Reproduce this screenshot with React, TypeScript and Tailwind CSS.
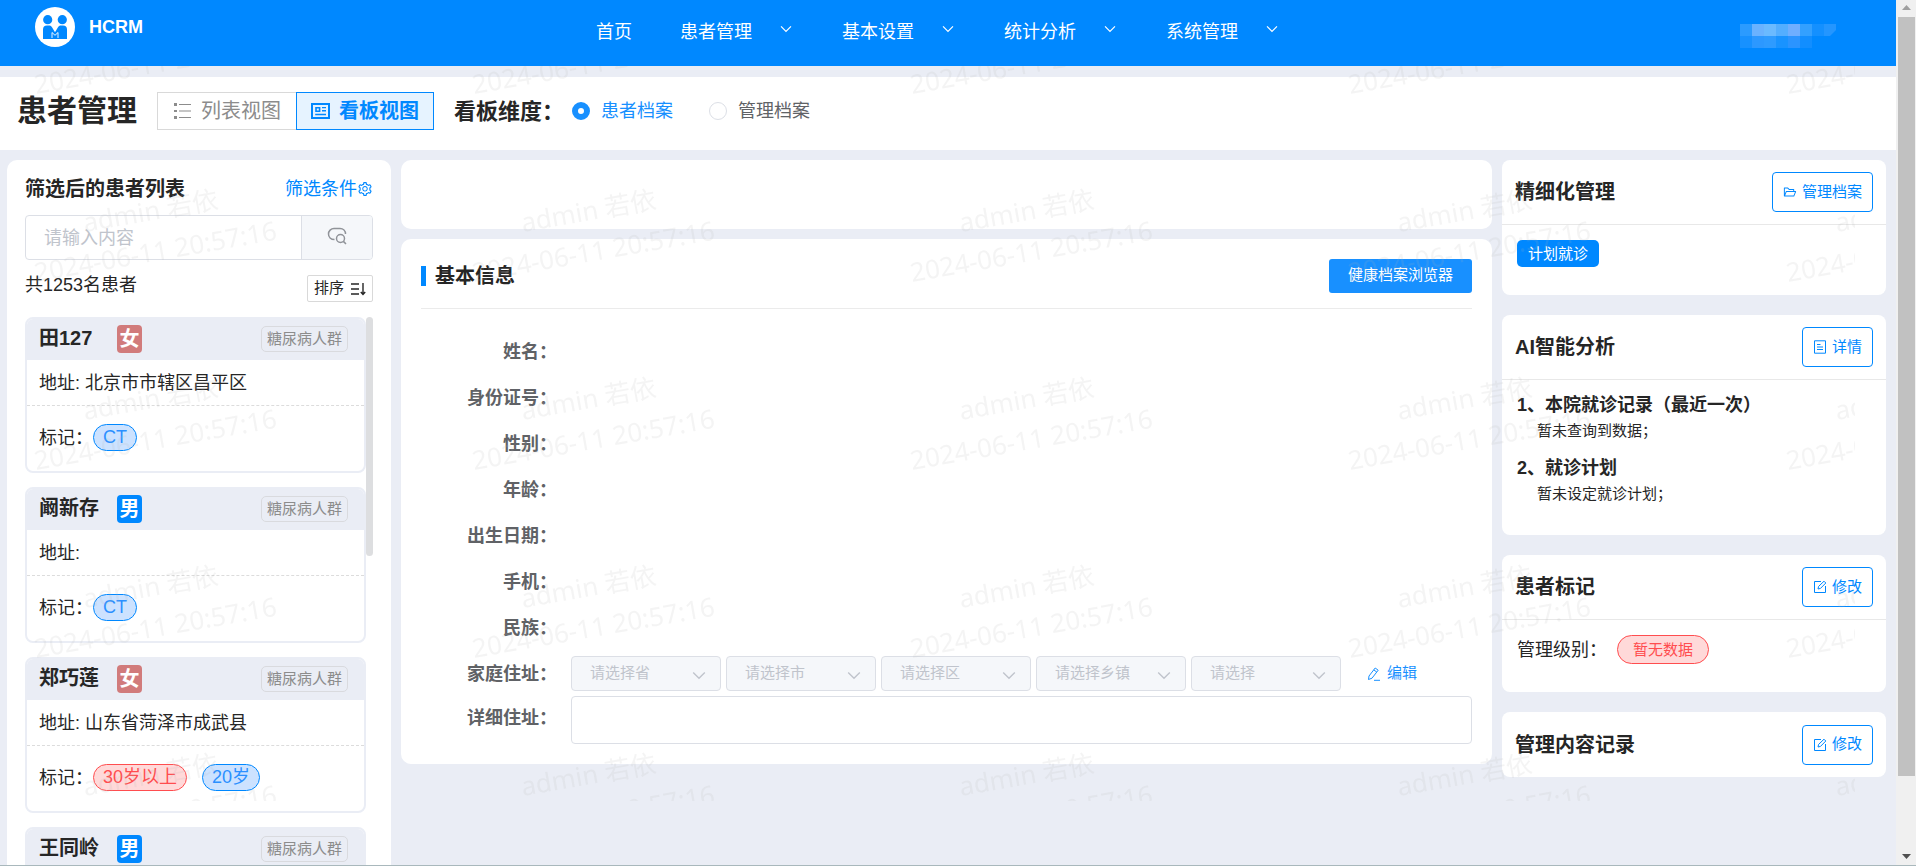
import { useState } from 'react'
import { AiOutlineFolderOpen, AiOutlineSetting } from 'react-icons/ai'
import clsx from 'clsx'

interface Mark {
  text: string
  color: 'blue' | 'red'
}

interface Patient {
  name: string
  gender: '男' | '女'
  group: string
  address: string
  marks: Mark[]
}

const navItems = [
  { label: '患者管理' },
  { label: '基本设置' },
  { label: '统计分析' },
  { label: '系统管理' }
]

const patients: Patient[] = [
  { name: '田127', gender: '女', group: '糖尿病人群', address: '北京市市辖区昌平区', marks: [{ text: 'CT', color: 'blue' }] },
  { name: '阚新存', gender: '男', group: '糖尿病人群', address: '', marks: [{ text: 'CT', color: 'blue' }] },
  {
    name: '郑巧莲',
    gender: '女',
    group: '糖尿病人群',
    address: '山东省菏泽市成武县',
    marks: [
      { text: '30岁以上', color: 'red' },
      { text: '20岁', color: 'blue' }
    ]
  },
  { name: '王同岭', gender: '男', group: '糖尿病人群', address: '', marks: [] }
]

const infoFields = ['姓名', '身份证号', '性别', '年龄', '出生日期', '手机', '民族']
const regionSelects = ['请选择省', '请选择市', '请选择区', '请选择乡镇', '请选择']

// Mosaic cells over the account name, two rows
const mosaic = [
  ['#2b9bff', '#6ab2ff', '#6bbaff', '#54aeff', '#6faeff', '#33a0ff', '#1490ff'],
  ['#1791ff', '#2c98ff', '#2e9bff', '#1993ff', '#2b94ff', '#128eff']
]

function Chevron({ className }: { className?: string }) {
  return (
    <svg viewBox="0 0 14 9" className={className} fill="none" stroke="currentColor" strokeWidth="1.4">
      <path d="M1.2 1.4 7 7.2l5.8-5.8" />
    </svg>
  )
}

function Logo() {
  return (
    <svg viewBox="0 0 40 40" className="h-10 w-10">
      <circle cx="20" cy="20" r="20" fill="#fff" />
      <g fill="#08f">
        <circle cx="12.7" cy="12.7" r="4.6" />
        <circle cx="27.3" cy="12.7" r="4.6" />
        <path d="M8 32V22.500a4 4 0 0 1 4-4h2c1.500 0 2.300.6 3 1.800l3 4.900 3-4.900c.7-1.200 1.500-1.800 3-1.800h2a4 4 0 0 1 4 4V32z" />
      </g>
      <path d="M17 31v-5.500l3 2.800 3-2.800V31" fill="none" stroke="#fff" strokeWidth="0.9" />
    </svg>
  )
}

function ListIcon() {
  return (
    <svg viewBox="0 0 19 18" className="h-[18px] w-[19px]" fill="currentColor">
      <path d="M1 1h3v3H1zM1 8h3v2H1zM1 14h3v3H1zM6 2h12v1H6zM6 8.4h12v1.2H6zM6 15h12v1H6z" />
    </svg>
  )
}

function BoardIcon() {
  return (
    <svg viewBox="0 0 19 18" className="h-[18px] w-[19px]" fill="none" stroke="currentColor" strokeWidth="2">
      <path d="M1 2h17v14H1z" />
      <path d="M5 5.7h3.6v3.6H5z" strokeWidth="1.6" />
      <path d="M11 5.6h4M11 8.8h4M4.2 12.5H15" strokeWidth="1.4" />
    </svg>
  )
}

function SearchIcon() {
  return (
    <svg viewBox="0 0 20 18" className="h-[18px] w-5" fill="none" stroke="currentColor" strokeWidth="1.5">
      <path d="M7.500 12.500C3.800 12.500 1.500 10 1.500 7S4 1.500 7 1.500h6c3.200 0 5.500 2.300 5.500 5.500" />
      <circle cx="13.500" cy="11.500" r="4" />
      <path d="m16.400 14.400 2.600 2.600" />
    </svg>
  )
}

function SortIcon() {
  return (
    <svg viewBox="0 0 16 14" className="h-3.5 w-4" fill="none" stroke="currentColor" strokeWidth="1.4">
      <path d="M1 2h8M1 7h8M1 12h8M13 1v11.500M10.800 10 13 12.400 15.200 10" />
    </svg>
  )
}

function DetailIcon() {
  return (
    <svg viewBox="0 0 14 14" className="h-3.5 w-3.5" fill="none" stroke="currentColor">
      <path d="M1.500.8h11v12.400h-11z" />
      <path d="M4 4.500h3.500M4 7h6M4 9.500h6" />
    </svg>
  )
}

function EditIcon() {
  return (
    <svg viewBox="0 0 14 14" className="h-3.5 w-3.5" fill="none" stroke="currentColor">
      <path d="M8 1.500H1.500v11h11V6" />
      <path d="M5 9l.6-2.600L11 1.200 12.800 3 7.500 8.400z" />
    </svg>
  )
}

function PenIcon() {
  return (
    <svg viewBox="0 0 14 14" className="h-3.5 w-3.5" fill="none" stroke="currentColor">
      <path d="M1.500 12.500 2 9l6.200-8 3 2.200L5 11.200zM6.800 2.900l3 2.200M7 13.300h6" />
    </svg>
  )
}

function PatientCard({ patient }: { patient: Patient }) {
  return (
    <article className="h-[156px] shrink-0 overflow-hidden rounded-lg border-2 border-[#eaedf5] bg-white">
      <header className="flex h-[41px] items-center bg-[#eaedf5] pr-4 pb-px pl-3">
        <h3 className="w-[78px] pb-0.5 text-xl leading-6 font-bold">{patient.name}</h3>
        <span
          className={clsx(
            'flex h-7 w-[25px] items-center justify-center rounded text-xl leading-6 font-bold text-white',
            patient.gender === '女' ? 'bg-[#d17b7b]' : 'bg-[#0088ff]'
          )}
        >
          {patient.gender}
        </span>
        <span className="ml-auto rounded-[5px] border border-[#d9dade] px-[5px] text-[15px] leading-6 text-[#8c8c8c]">
          {patient.group}
        </span>
      </header>
      <p className="flex h-[46px] items-center border-b border-dashed border-[#dcdcdc] px-3 text-lg">
        地址: {patient.address}
      </p>
      <div className="flex h-[63px] items-center px-3 text-lg">
        <span>标记：</span>
        <div className="flex gap-[15px]">
          {patient.marks.map((mark) => (
            <span
              key={mark.text}
              className={clsx(
                'rounded-full border px-[9px] leading-[25px]',
                mark.color === 'red'
                  ? 'border-[#ff4d4f] bg-[#ffd9d9] text-[#ff4d4f]'
                  : 'border-[#0088ff] bg-[#cce2ff] text-[#2b90ff]'
              )}
            >
              {mark.text}
            </span>
          ))}
        </div>
      </div>
    </article>
  )
}

interface SideCardProps {
  title: string
  action: string
  icon: React.ReactNode
  children?: React.ReactNode
}

function SideCard({ title, action, icon, children }: SideCardProps) {
  return (
    <section className="rounded-lg bg-white">
      <header className={clsx('flex h-[65px] items-center justify-between px-[13px]', children && 'border-b border-[#e8e8e8]')}>
        <h2 className="text-xl font-bold">{title}</h2>
        <button className="flex h-10 items-center gap-[5px] rounded border border-[#0088ff] px-2.5 text-[15px] text-[#0088ff]">
          {icon}
          {action}
        </button>
      </header>
      {children}
    </section>
  )
}

function Watermark() {
  return (
    <svg className="pointer-events-none absolute top-0 left-[25px] z-10 h-[calc(100%-64px)] w-[calc(100%-66px)]">
      <defs>
        <pattern id="mark" y="-67" width="438" height="188" patternUnits="userSpaceOnUse">
          <g fill="#b4b4b4" fillOpacity="0.14" fontSize="26" fontFamily="'Noto Sans', 'Noto Sans CJK SC', sans-serif">
            <text x="60" y="45" transform="rotate(-10 60 45)">admin 若依</text>
            <text x="11" y="95" transform="rotate(-10 11 95)">2024-06-11 20:57:16</text>
          </g>
        </pattern>
      </defs>
      <rect width="100%" height="100%" fill="url(#mark)" />
    </svg>
  )
}

export default function App() {
  const [view, setView] = useState<'list' | 'board'>('board')
  const [dimension, setDimension] = useState('患者档案')
  const [keyword, setKeyword] = useState('')

  return (
    <div className="flex h-screen flex-col border-b border-[#a9b8bc] bg-[#eaedf5] font-['Liberation_Sans','Noto_Sans_CJK_SC',sans-serif] text-[#262626]">
      <div className="flex min-h-0 flex-1">
        <div className="flex min-w-0 flex-1 flex-col">
          {/* Top navigation */}
          <header className="flex h-[66px] shrink-0 bg-[#0088ff] text-white">
            <div className="flex w-[596px] items-start pt-[7px] pl-[35px]">
              <Logo />
              <span className="ml-3.5 text-lg leading-10 font-bold">HCRM</span>
            </div>
            <nav className="flex h-16 items-center text-lg">
              <a href="#" className="mr-12">首页</a>
              {navItems.map((item) => (
                <a key={item.label} href="#" className="mr-[50px] flex items-center">
                  {item.label}
                  <Chevron className="mb-1.5 ml-7 h-2 w-3" />
                </a>
              ))}
            </nav>
            <svg viewBox="0 0 96 24" className="mt-6 mr-[60px] ml-auto h-6 w-24">
              {mosaic.map((row, y) =>
                row.map((fill, x) => <rect key={`${x}-${y}`} x={x * 12} y={y * 12} width="12" height="12" fill={fill} />)
              )}
              <path d="M84 0h12v6l-6 6h-6z" fill="#2496ff" />
            </svg>
          </header>

          <div className="relative flex min-h-0 flex-1 flex-col pt-[11px]">
            <Watermark />

            {/* Page title and view switch */}
            <div className="flex h-[73px] shrink-0 items-center bg-white pb-[5px] pl-[17px]">
              <h1 className="text-3xl font-bold">患者管理</h1>
              <div className="ml-5 flex text-xl">
                <button
                  onClick={() => setView('list')}
                  className={clsx(
                    'flex h-[38px] items-center gap-[9px] border px-[15px]',
                    view === 'list' ? 'border-[#0088ff] bg-[#e6f3ff] font-bold text-[#0088ff]' : 'border-r-0 border-[#d9d9d9] text-[#8c8c8c]'
                  )}
                >
                  <ListIcon />
                  列表视图
                </button>
                <button
                  onClick={() => setView('board')}
                  className={clsx(
                    'flex h-[38px] items-center gap-[9px] border px-3.5',
                    view === 'board' ? 'border-[#0088ff] bg-[#e6f3ff] font-bold text-[#0088ff]' : 'border-l-0 border-[#d9d9d9] text-[#8c8c8c]'
                  )}
                >
                  <BoardIcon />
                  看板视图
                </button>
              </div>
              <span className="ml-5 text-[22px] font-bold">看板维度：</span>
              <div className="ml-2 flex gap-9 text-lg">
                {['患者档案', '管理档案'].map((name) => (
                  <label key={name} className="flex cursor-pointer items-center gap-[11px] text-[#606266] has-checked:text-[#1890ff]">
                    <input
                      type="radio"
                      name="dimension"
                      checked={dimension === name}
                      onChange={() => setDimension(name)}
                      className="h-[18px] w-[18px] appearance-none rounded-full border border-[#dcdfe6] bg-white checked:border-[6px] checked:border-[#1890ff]"
                    />
                    {name}
                  </label>
                ))}
              </div>
            </div>

            <main className="grid min-h-0 flex-1 grid-cols-[384px_minmax(0,1fr)_384px] grid-rows-[minmax(0,1fr)] gap-2.5 pt-2.5 pr-2.5 pl-[7px]">
              {/* Patient list */}
              <section className="flex min-h-0 flex-col rounded-t-[10px] bg-white px-[18px] pt-3.5">
                <div className="flex h-[30px] shrink-0 items-center justify-between">
                  <h2 className="text-xl font-bold">筛选后的患者列表</h2>
                  <a href="#" className="flex items-center text-lg text-[#0088ff]">
                    筛选条件
                    <AiOutlineSetting className="h-4 w-4" />
                  </a>
                </div>
                <div className="mt-[11px] flex h-[45px] shrink-0 overflow-hidden rounded border border-[#dcdfe6]">
                  <input
                    type="text"
                    aria-label="请输入内容"
                    placeholder="请输入内容"
                    value={keyword}
                    onChange={(e) => setKeyword(e.target.value)}
                    className="min-w-0 flex-1 px-[18px] text-lg outline-none placeholder:text-[#c0c4cc]"
                  />
                  <button aria-label="搜索" className="flex w-[71px] items-center justify-center border-l border-[#dcdfe6] bg-[#f5f7fa] pb-1 text-[#909399]">
                    <SearchIcon />
                  </button>
                </div>
                <div className="mt-[15px] flex h-[27px] shrink-0 items-center justify-between">
                  <span className="pb-2 text-lg leading-6">共1253名患者</span>
                  <button className="flex h-[27px] items-center gap-1.5 rounded-xs border border-[#d9d9d9] px-1.5 text-[15px]">
                    排序
                    <SortIcon />
                  </button>
                </div>
                <div className="mt-[15px] flex min-h-0 flex-1 overflow-hidden">
                  <div className="flex min-w-0 flex-1 flex-col gap-3.5">
                    {patients.map((patient) => (
                      <PatientCard key={patient.name} patient={patient} />
                    ))}
                  </div>
                  <div className="h-[239px] w-[7px] rounded-full bg-[#dddee0]" />
                </div>
              </section>

              {/* Basic info */}
              <div className="flex flex-col gap-2.5">
                <section className="h-[69px] rounded-[10px] bg-white" />
                <section className="rounded-[10px] bg-white px-5 pb-5">
                  <header className="flex h-[70px] items-center border-b border-[#ebebeb] pt-1">
                    <span className="h-5 w-[5px] bg-[#0088ff]" />
                    <h2 className="ml-[9px] text-xl font-bold">基本信息</h2>
                    <button className="ml-auto h-[34px] rounded-[3px] bg-[#1890ff] px-[19px] text-[15px] text-white">健康档案浏览器</button>
                  </header>
                  <dl className="pt-5">
                    {infoFields.map((field) => (
                      <div key={field} className="flex h-[46px] items-center">
                        <dt className="w-[150px] pr-3.5 text-right text-lg font-bold text-[#606266]">{field}：</dt>
                        <dd />
                      </div>
                    ))}
                  </dl>
                  <div className="flex h-[45px] items-center">
                    <span className="w-[150px] pr-3.5 text-right text-lg font-bold text-[#606266]">家庭住址：</span>
                    <div className="flex gap-[5px]">
                      {regionSelects.map((name) => (
                        <div key={name} className="relative">
                          <select
                            disabled
                            aria-label={name}
                            className="h-[35px] w-[150px] appearance-none rounded border border-[#dcdfe6] bg-[#f5f7fa] pl-[18px] text-[15px] text-[#c0c4cc] opacity-100"
                          >
                            <option>{name}</option>
                          </select>
                          <Chevron className="absolute top-[15px] right-[15px] h-[9px] w-3.5 text-[#c0c4cc]" />
                        </div>
                      ))}
                    </div>
                    <button className="ml-[26px] flex items-center gap-1.5 text-[15px] text-[#1890ff]">
                      <PenIcon />
                      编辑
                    </button>
                  </div>
                  <div className="flex">
                    <label htmlFor="address" className="w-[150px] shrink-0 pr-3.5 text-right text-lg leading-[45px] font-bold text-[#606266]">
                      详细住址：
                    </label>
                    <textarea id="address" className="h-12 min-w-0 flex-1 resize-none rounded border border-[#dcdfe6] px-4 py-2 text-lg outline-none" />
                  </div>
                </section>
              </div>

              {/* Management cards */}
              <aside className="flex flex-col gap-5">
                <SideCard title="精细化管理" action="管理档案" icon={<AiOutlineFolderOpen className="h-3.5 w-3.5" />}>
                  <div className="flex px-[15px] pt-[15px] pb-7">
                    <span className="rounded-[5px] bg-[#0088ff] px-[11px] text-[15px] leading-[27px] text-white">计划就诊</span>
                  </div>
                </SideCard>
                <SideCard title="AI智能分析" action="详情" icon={<DetailIcon />}>
                  <div className="px-[15px] pt-3 pb-[27px]">
                    <h3 className="text-lg leading-[26px] font-bold">1、本院就诊记录（最近一次）</h3>
                    <p className="mb-3 pl-5 text-[15px] leading-[25px]">暂未查询到数据；</p>
                    <h3 className="text-lg leading-[26px] font-bold">2、就诊计划</h3>
                    <p className="mb-0.5 pl-5 text-[15px] leading-[25px]">暂未设定就诊计划；</p>
                  </div>
                </SideCard>
                <SideCard title="患者标记" action="修改" icon={<EditIcon />}>
                  <div className="flex items-center px-[15px] pt-[15px] pb-7 text-lg">
                    <span>管理级别：</span>
                    <span className="ml-2.5 rounded-full border border-[#ff4d4f] bg-[#ffd9d9] px-[15px] text-[15px] leading-[27px] text-[#ff4d4f]">
                      暂无数据
                    </span>
                  </div>
                </SideCard>
                <SideCard title="管理内容记录" action="修改" icon={<EditIcon />} />
              </aside>
            </main>
          </div>
        </div>

        {/* Page scroll bar */}
        <div className="flex w-5 shrink-0 flex-col items-center bg-[#f0f0f0] pr-px pl-0.5">
          <svg viewBox="0 0 17 17" className="h-[17px] w-[17px] shrink-0" fill="#a0a0a0">
            <path d="M4 10l4.500-5 4.500 5z" />
          </svg>
          <div className="w-full flex-[758] bg-[#c1c1c1]" />
          <div className="flex-[72]" />
          <svg viewBox="0 0 17 17" className="h-[17px] w-[17px] shrink-0" fill="#505050">
            <path d="M4 6l4.500 5L13 6z" />
          </svg>
        </div>
      </div>
    </div>
  )
}
